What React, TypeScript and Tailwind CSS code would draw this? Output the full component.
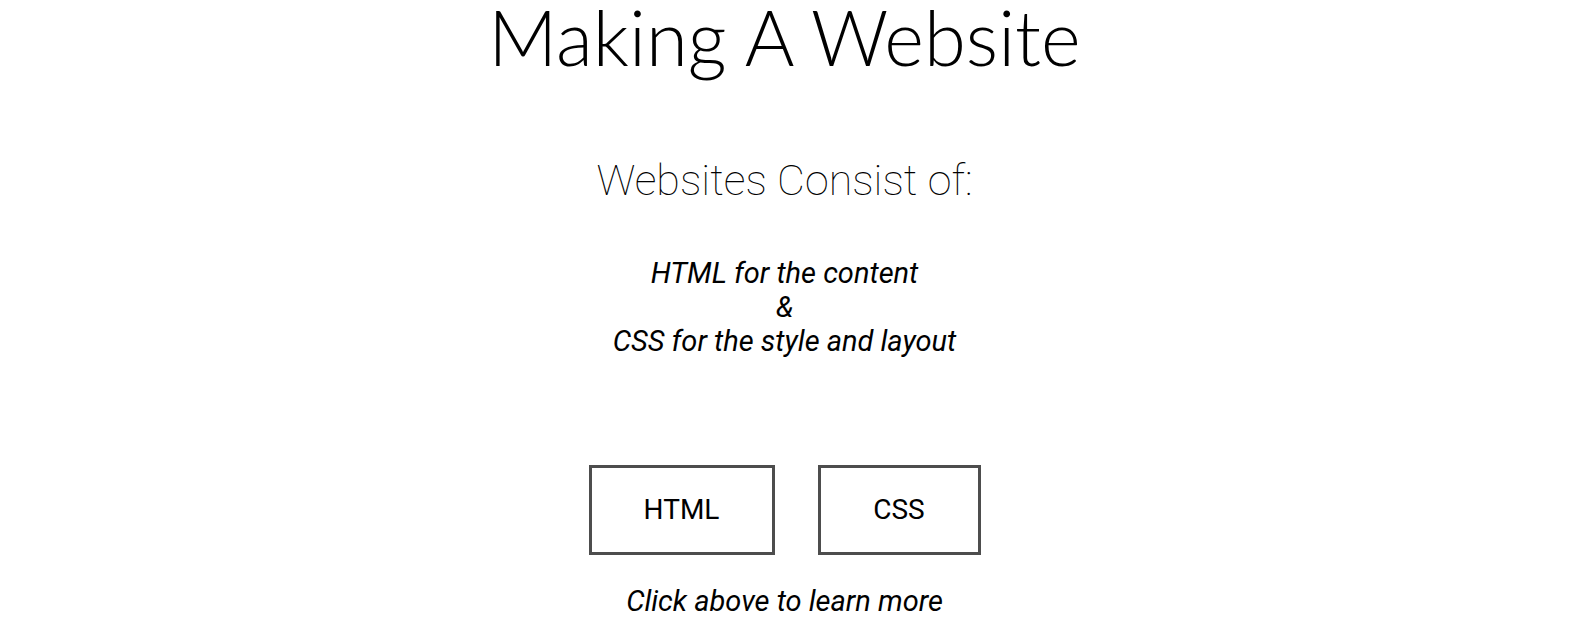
export default function App() {
    return (
        <div className="min-h-screen bg-white text-black font-['Roboto',sans-serif]">
            <div className="w-[1569px] flex flex-col items-center">
                <h1 className="text-[76px] leading-[73px] font-light font-['Lato',sans-serif]">Making A Website</h1>

                <h2 className="mt-[81px] text-[43px] leading-[52px] font-thin">Websites Consist of:</h2>

                <div className="mt-[50px] text-center italic text-[29px] leading-[34px]">
                    <p>HTML for the content</p>
                    <p>&amp;</p>
                    <p>CSS for the style and layout</p>
                </div>

                <div className="mt-[107px] flex gap-[43px]">
                    <button className="w-[186px] h-[90px] border-[3px] border-[#4d4d4d] text-[28px]">HTML</button>
                    <button className="w-[163px] h-[90px] border-[3px] border-[#4d4d4d] text-[28px]">CSS</button>
                </div>

                <p className="mt-[29px] italic text-[29px] leading-[34px]">Click above to learn more</p>
            </div>
        </div>
    );
}
